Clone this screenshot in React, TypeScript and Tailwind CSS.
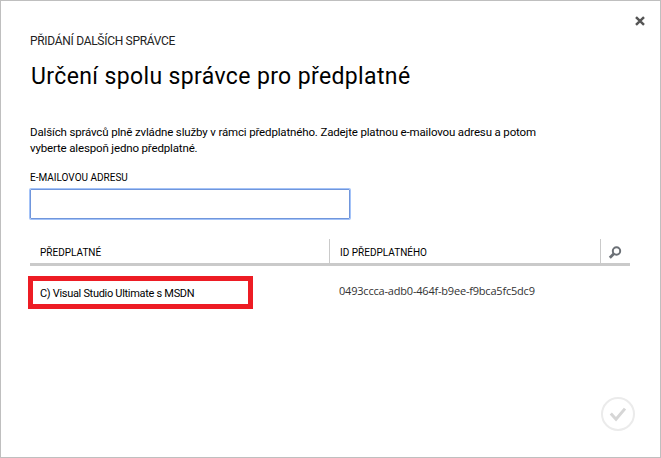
import React from "react";

function CloseIcon() {
  return (
    <svg width="10" height="10" viewBox="0 0 10 10" fill="none" stroke="#555" strokeWidth="2.5">
      <path d="M1 1.2 9 8.8M9 1.2 1 8.8" />
    </svg>
  );
}

function SearchIcon() {
  return (
    <svg width="14" height="14" viewBox="0 0 14 14" fill="none" stroke="#6b7076">
      <circle cx="8.5" cy="5" r="3.7" strokeWidth="2" />
      <path d="M5.8 7.8 1.8 11.8" strokeWidth="2.8" />
    </svg>
  );
}

function ConfirmIcon() {
  return (
    <svg width="34" height="34" viewBox="0 0 34 34" fill="none">
      <circle cx="17" cy="17" r="16" stroke="#ebebeb" strokeWidth="2" />
      <path d="M9.8 16.6 15 22.2 24 11.6" stroke="#d6d6d6" strokeWidth="3" />
    </svg>
  );
}

export default function App() {
  return (
    <main className="flex h-[458px] w-[661px] flex-col border border-[#bfbfbf] bg-white pr-[30px] pl-[29px] font-['Roboto','Liberation_Sans',sans-serif] text-black">
      <header className="flex h-[31px] items-start justify-end pt-[15px]">
        <button aria-label="Zavřít" className="-mr-[15px]"><CloseIcon /></button>
      </header>
      <p className="h-[29px] text-[12px] leading-[18px] tracking-[-0.3px] whitespace-nowrap text-[#222]">PŘIDÁNÍ DALŠÍCH SPRÁVCE</p>
      <h1 className="h-[63px] pl-px text-[23px] leading-[32px] tracking-[0.37px] whitespace-nowrap">Určení spolu správce pro předplatné</h1>
      <p className="text-[11.5px] leading-[16px] tracking-[-0.15px] whitespace-nowrap">
        Dalších správců plně zvládne služby v rámci předplatného. Zadejte platnou e-mailovou adresu a potom<br />
        vyberte alespoň jedno předplatné.
      </p>
      <label className="mt-[13px] h-[19px] text-[10px] leading-[17px] whitespace-nowrap" htmlFor="email">E-MAILOVOU ADRESU</label>
      <input id="email" className="mx-0 h-[30px] w-[320px] rounded-[1px] border border-[#7096dc] px-2 text-[12px] outline-none ring-1 ring-[#a4c3f8] mt-px mb-px" />
      <section className="mt-[19px]">
        <div className="flex h-[27px] border-b-[3px] border-[#cacaca] text-[10px] leading-[27px] whitespace-nowrap">
          <div className="w-[299px] pl-[10px]">PŘEDPLATNÉ</div>
          <div className="w-[271px] border-l border-[#cacaca] pl-[10px]">ID PŘEDPLATNÉHO</div>
          <div className="flex flex-1 border-l border-[#cacaca] pt-[7px] pl-[7px]"><SearchIcon /></div>
        </div>
        <div className="flex pt-[10px]">
          <div className="-ml-[2px] h-[33px] w-[225px] border-[5px] border-[#ed1c24] pl-[7px] text-[11px] leading-[25px] tracking-[-0.3px] whitespace-nowrap">C) Visual Studio Ultimate s MSDN</div>
          <div className="ml-[86px] font-['Open_Sans',sans-serif] text-[11px] leading-[30px] tracking-[-0.2px] text-[#333]">0493ccca-adb0-464f-b9ee-f9bca5fc5dc9</div>
        </div>
      </section>
      <footer className="mt-auto flex justify-end pb-[26px]">
        <button aria-label="Potvrdit" className="-mr-[5px]"><ConfirmIcon /></button>
      </footer>
    </main>
  );
}
